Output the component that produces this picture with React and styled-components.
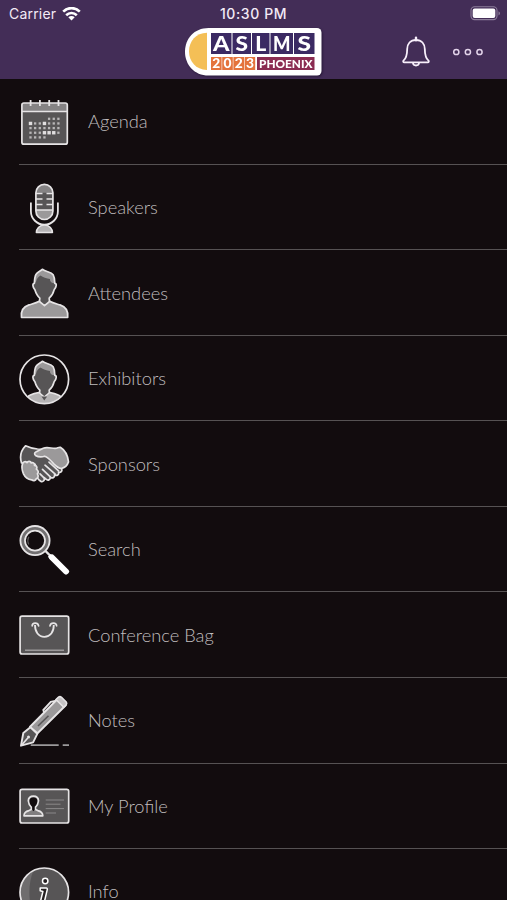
import React from "react";
import styled, {createGlobalStyle} from "styled-components";

const GlobalStyle = createGlobalStyle`
  body {
    margin: 0;
    background: #120c0e;
    overflow: hidden;
  }
`;

const LIGHT = "#e6e4e5";
const MID = "#9b999a";
const DARK = "#575556";

const menus = [
    {name: "Agenda", Icon: AgendaIcon},
    {name: "Speakers", Icon: SpeakersIcon},
    {name: "Attendees", Icon: AttendeesIcon},
    {name: "Exhibitors", Icon: ExhibitorsIcon},
    {name: "Sponsors", Icon: SponsorsIcon},
    {name: "Search", Icon: SearchIcon},
    {name: "Conference Bag", Icon: BagIcon},
    {name: "Notes", Icon: NotesIcon},
    {name: "My Profile", Icon: ProfileIcon},
    {name: "Info", Icon: InfoIcon},
];

export default function App() {
    return (
        <Screen>
            <GlobalStyle/>
            <Header>
                <StatusBar>
                    <Carrier>
                        <span>Carrier</span>
                        <WifiIcon/>
                    </Carrier>
                    <Clock>10:30 PM</Clock>
                    <BatteryIcon/>
                </StatusBar>
                <NavBar>
                    <span/>
                    <Logo/>
                    <Actions>
                        <BellIcon/>
                        <MoreIcon/>
                    </Actions>
                </NavBar>
            </Header>
            <Menu>
                {
                    menus.map(({name, Icon}) => (
                        <MenuItem key={name}>
                            <MenuIcon viewBox="0 0 52 52"><Icon/></MenuIcon>
                            <MenuName>{name}</MenuName>
                        </MenuItem>
                    ))
                }
            </Menu>
        </Screen>
    );
}

// status bar icons
function WifiIcon() {
    return (
        <svg width="19" height="14" viewBox="0 0 19 14" fill="none" stroke="#fff" strokeWidth="2.6">
            <path d="M1.2 4.600C6 -.1 13 -.1 17.800 4.600"/>
            <path d="M4.200 8.200c3-2.900 7.600-2.900 10.600 0"/>
            <path d="M6.300 10.300c1.800-1.700 4.600-1.700 6.400 0l-3.200 3.200z" fill="#fff" stroke="none"/>
        </svg>
    );
}

function BatteryIcon() {
    return (
        <svg width="32" height="15" viewBox="0 0 32 15">
            <rect x="1" y=".8" width="26" height="12.800" rx="3.600" fill="none" stroke="#8d7e9b" strokeWidth="1.100"/>
            <rect x="2.700" y="2.500" width="22.600" height="9.400" rx="2" fill="#fff"/>
            <path d="M28.500 5.200c2 .8 2 3.400 0 4.200z" fill="#8d7e9b"/>
        </svg>
    );
}

function BellIcon() {
    return (
        <svg width="28" height="32" viewBox="0 0 28 32" fill="none" stroke="#f8effb" strokeWidth="1.800"
             strokeLinecap="round" strokeLinejoin="round">
            <path d="M14 1.800v2.400" strokeWidth="2.400"/>
            <path d="M14 4C8.300 4 5.300 8 5.200 13c-.1 6-1 9.300-3.500 11.400-.9.900-.6 2 .6 2h23.400c1.200 0 1.500-1.100.6-2-2.500-2.100-3.400-5.400-3.500-11.400C22.700 8 19.700 4 14 4z"/>
            <path d="M11 27c.3 3.300 5.700 3.300 6 0"/>
        </svg>
    );
}

function MoreIcon() {
    return (
        <svg width="32" height="8" viewBox="0 0 32 8" fill="none" stroke="#e3d4ea" strokeWidth="1.500">
            <circle cx="4.300" cy="4" r="2.600"/>
            <circle cx="15.900" cy="4" r="2.600"/>
            <circle cx="27.500" cy="4" r="2.600"/>
        </svg>
    );
}

function Logo() {
    // letter, tile x, tile width, glyph width
    const letters = [
        ["A", 26, 20.5, 16.5],
        ["S", 47.5, 18.5, 12.5],
        ["L", 67, 17.5, 11],
        ["M", 85.5, 22.5, 17.5],
        ["S", 109, 20.5, 13.5],
    ];
    const years = ["2", "0", "2", "3"];
    return (
        <LogoSvg width="137" height="48" viewBox="0 0 137 48">
            <path d="M23.500 0H132a4.500 4.500 0 0 1 4.500 4.500V43a4.500 4.500 0 0 1-4.500 4.500H23.500C9 47.500 0 36.500 0 23.700S9 0 23.500 0z" fill="#fff"/>
            <path d="M22 4.700v37.200C11 42 4 33.500 4 23.300S11 4.700 22 4.700z" fill="#f4bf56"/>
            {letters.map(([letter, x, w, glyph], id) => (
                <g key={id}>
                    <rect x={x} y="5" width={w} height="21" fill="#3b2a63"/>
                    <text x={x + (w - glyph) / 2} y="22.700" fontSize="20.500" textLength={glyph}
                          lengthAdjust="spacingAndGlyphs">{letter}</text>
                </g>
            ))}
            {years.map((num, id) => (
                <g key={id}>
                    <rect x={26 + id * 11.2} y="29" width="10.600" height="13" fill="#e4733c"/>
                    <text x={27.3 + id * 11.2} y="40.200" fontSize="13" textLength="8"
                          lengthAdjust="spacingAndGlyphs">{num}</text>
                </g>
            ))}
            <rect x="72" y="29" width="57.500" height="13" fill="#8b2c52"/>
            <text x="74" y="39.700" fontSize="11.500" textLength="53.500" lengthAdjust="spacingAndGlyphs">PHOENIX</text>
        </LogoSvg>
    );
}

// menu icons, all of them on a 52 x 52 grid
function AgendaIcon() {
    const dots = [];
    for (let row = 0; row < 5; row++) {
        for (let col = 0; col < 7; col++) {
            if ((row === 0 && col < 4) || (row === 4 && col > 3)) continue;
            const big = (row === 1 && (col === 0 || col === 3)) || (row === 3 && col > 2 && col < 6);
            const size = big ? 3.4 : 2.3;
            dots.push(
                <rect key={row + "-" + col} x={12.5 + col * 4.65 - size / 2} y={22.8 + row * 4.65 - size / 2}
                      width={size} height={size} fill={big ? "#e0dedf" : "#b9b7b8"}/>
            );
        }
    }
    return (
        <>
            <rect x="3.900" y="7" width="45.400" height="41.200" rx="2" fill={DARK}/>
            <path d="M4 15.500V9q0-2 2-2h41.300q2 0 2 2v6.500z" fill="#858384"/>
            <rect x="3.900" y="7" width="45.400" height="41.200" rx="2" fill="none" stroke={LIGHT} strokeWidth="1.700"/>
            <path d="M4 15.500h45" stroke={LIGHT} strokeWidth="1.700"/>
            <path d="M12.600 4v6M21.900 4v6M31.200 4v6M40.500 4v6" stroke={LIGHT} strokeWidth="1.800"/>
            {dots}
        </>
    );
}

function SpeakersIcon() {
    return (
        <>
            <rect x="17.900" y="2.300" width="17" height="35.200" rx="8.500" fill={DARK}/>
            <path d="M18 28h17v1a8.500 8.500 0 0 1-17 0z" fill={MID}/>
            <path d="M18 10.800a8.500 8.500 0 0 1 17 0z" fill="#858384"/>
            <rect x="17.900" y="2.300" width="17" height="35.200" rx="8.500" fill="none" stroke={LIGHT} strokeWidth="1.700"/>
            <path d="M18 28h17M18 11.500h6.500M28.500 11.500H35M18 17h6.500M28.500 17H35M18 22.500h6.500M28.500 22.500H35" stroke={LIGHT} strokeWidth="1.600"/>
            <path d="M12.900 20.500v8.700a13.500 13.500 0 0 0 27 0v-8.700" fill="none" stroke={LIGHT} strokeWidth="1.800"/>
            <path d="M18.400 50.500c0-3.500 2.800-7.500 8-7.500s8 4 8 7.500z" fill="#b5b3b4" stroke={LIGHT} strokeWidth="1.600" strokeLinejoin="round"/>
        </>
    );
}

// head with hair, used by attendees and exhibitors
function Head() {
    return (
        <>
            <path d="M24.300 2.300c-2 2-4.800 2.300-6.300 5-1.400 2.500-1.500 5-1.600 9-2.300 0-1.700 4.300.4 6.300 1.200 4 2.400 6.400 5 8.500l-.5 5.300 5.200 3.200 5.200-3.200-.5-5.300c2.600-2.100 4-4.500 5-8.500 2.200-2 2.900-6.300.6-6.300 0-3.500-.2-6-1.700-8.600-2.200-3.200-7-2.500-10.800-5.400z" fill={DARK}/>
            <path d="M24.300 2.300c-2 2-4.800 2.300-6.300 5-1.400 2.500-1.500 5-1.600 9l1.600-1.500c.7-3.500 2.600-5 4.500-6.300 2.500 2 6 3 9.500 3.500-.2 2 1 3.500 2.700 4l2.100.3c0-3.500-.2-6-1.700-8.600-2.200-3.200-7-2.500-10.800-5.400z" fill={MID}/>
            <path d="M21.300 36.400l.5-5.300c-2.600-2.100-3.800-4.500-5-8.500-2.100-2-2.700-6.300-.4-6.300.1-4 .2-6.500 1.600-9 1.500-2.700 4.300-3 6.300-5 3.800 2.900 8.600 2.200 10.800 5.400 1.500 2.600 1.700 5.100 1.700 8.600 2.300 0 1.600 4.300-.6 6.300-1 4-2.400 6.400-5 8.500l.5 5.300" fill="none" stroke={LIGHT} strokeWidth="1.700" strokeLinejoin="round"/>
        </>
    );
}

function AttendeesIcon() {
    return (
        <>
            <Head/>
            <path d="M3.500 50.500c-1-7.500 2.500-11 7.500-12.600 4-1.200 7.500-2 10.300-3.600l5.200 4.300 5.200-4.300c2.800 1.600 6.300 2.400 10.300 3.600 5 1.600 8.500 5.100 7.700 12.600z"
                  fill={MID} stroke={LIGHT} strokeWidth="1.700" strokeLinejoin="round"/>
        </>
    );
}

function ExhibitorsIcon() {
    return (
        <>
            <clipPath id="badge"><circle cx="26.300" cy="26.300" r="24.200"/></clipPath>
            <g clipPath="url(#badge)">
                <g transform="translate(0 6)"><Head/></g>
                <path d="M7 47c2.500-5.500 9-6.600 14-7.500l5.300 4.500 5.300-4.500c5 .9 11.500 2 14 7.500v8H7z" fill="#b5b3b4" stroke={LIGHT} strokeWidth="1.400"/>
                <path d="M23.500 43.500h5.600l-2.800 4z" fill={DARK}/>
            </g>
            <circle cx="26.300" cy="26.300" r="24.300" fill="none" stroke={LIGHT} strokeWidth="1.700"/>
        </>
    );
}

function SponsorsIcon() {
    return (
        <g stroke={LIGHT} strokeWidth="1.700" strokeLinejoin="round" strokeLinecap="round" transform="translate(0 .4)">
            <path d="M7.500 7.400c3.500 1.700 7.500 2.800 12 3.200l8 .4 16 19.300c1.200 2.700-.8 4.200-3 3.400.8 2.700-1.600 4.200-4 2.700.5 2.900-2.300 4-4.300 2.400.3 2.700-2.400 3.700-4.200 2l-1.800-1.600c.8 2.500-1 4.700-3.300 3.800-1.600-.7-3-2.500-4.200-4l-1.500-13-13.700-1.500c-2-6.500-.5-12.500 4-17.100z" fill={DARK}/>
            <path d="M4.500 25.500c1-2.500 3-2.700 4.500-1.300 1-1.800 3.500-1.500 4.200.3 2-.8 3.600.6 3.300 2.500 2.300.2 3 2.200 1.900 3.700 2.200 1.500 2.300 3.500 1 4.800 1.500 2.500.6 4.300-1 4.700-1 2.500-3 2.500-4.800 1.200-3.300-.4-6.700-3-8.100-6-1.500-3.500-2-7-1-9.900z" fill={MID}/>
            <path d="M17.500 17c-1.200-1-1.200-2.600.3-3.300l7.500-3.900c4.200-1.700 8.200.4 12 .2 2.200-.1 3.200-1.400 5-1.100 4.700 2.800 7.500 8.300 8.200 14.600-1.200 3.500-3.500 6-7.200 6.600-3.400-.4-5.600-2.600-7.600-4.600-2.800-3.200-5.200-6.500-9-7.700-3.400 1-6.200.9-9.200-.8z" fill={MID}/>
            <path d="M27 26.800l10.200 9M24.500 31l7.800 7.500M22 35.500l4.300 4.200M31 23.700l9.500 8.800" fill="none"/>
        </g>
    );
}

function SearchIcon() {
    return (
        <>
            <circle cx="17" cy="16.600" r="12.300" fill="none" stroke="#727071" strokeWidth="5"/>
            <circle cx="17" cy="16.600" r="14.600" fill="none" stroke={LIGHT} strokeWidth="1.800"/>
            <circle cx="17" cy="16.600" r="10" fill="none" stroke={LIGHT} strokeWidth="1.700"/>
            <path d="M10.800 20.500c-1.300-2.600-1.300-5.200 0-7.800" fill="none" stroke={DARK} strokeWidth="1.200"/>
            <path d="M27.500 27l5 5" stroke={LIGHT} strokeWidth="2.400"/>
            <path d="M34 33.500l14 14" stroke="#fff" strokeWidth="6" strokeLinecap="round"/>
            <path d="M31.300 31.300l4 4" stroke="#fff" strokeWidth="4"/>
        </>
    );
}

function BagIcon() {
    return (
        <>
            <rect x="2.100" y="7.200" width="48.600" height="37.800" rx="2" fill={DARK} stroke={LIGHT} strokeWidth="1.700"/>
            <path d="M7 41.200h39" stroke={MID} strokeWidth="1.400"/>
            <path d="M14.200 16.800c0-3.700 5.800-3.700 6.400 0M32 16.800c.6-3.700 6.400-3.700 6.600 0" fill="none" stroke={LIGHT} strokeWidth="1.700" strokeLinecap="round"/>
            <path d="M17 16c0 7 3.500 11.800 9.400 11.800s9.400-4.800 9.400-11.800" fill="none" stroke={LIGHT} strokeWidth="1.800"/>
        </>
    );
}

function NotesIcon() {
    return (
        <>
            <path d="M12.700 50.200h28M44.700 50.200h6.300" stroke={MID} strokeWidth="1.700"/>
            <path d="M40.500 3l7.300 7.300-28.300 28-7.700-6.300z" fill={MID} stroke={LIGHT} strokeWidth="1.900" strokeLinejoin="round"/>
            <path d="M38 4.500l2.800-2.600c1-.6 1.800-.4 2.700.4l4.700 4.700c.7.900.7 1.800 0 2.700l-2.500 2.500z" fill="#c5c3c4" stroke={LIGHT} strokeWidth="1.600"/>
            <path d="M37.300 6l-4.500.8L25.300 15l.8 2.500" fill="none" stroke={LIGHT} strokeWidth="1.900"/>
            <path d="M20 31l10.500-10.300" stroke={DARK} strokeWidth="1.600"/>
            <path d="M12.400 32.300l6.900 6.600-4.200 8.400L3 50.700 5.300 38z" fill={DARK} stroke={LIGHT} strokeWidth="1.900" strokeLinejoin="round"/>
            <path d="M3.500 50.200l6.300-7.300" stroke={LIGHT} strokeWidth="1.600"/>
            <circle cx="10.500" cy="42" r="1.500" fill={LIGHT}/>
        </>
    );
}

function ProfileIcon() {
    return (
        <>
            <rect x="2.100" y="9.300" width="48.600" height="33.700" rx="2" fill={DARK} stroke={LIGHT} strokeWidth="1.700"/>
            <path d="M6 35.800c0-3.300 2-4.500 5-5.200l2.300-1.200v-2.300c-1.700-1.500-2.800-3.700-3-6.300.2-3.500 2.200-4.700 5.100-4.700s5 1.400 5.100 4.700c-.2 2.600-1.300 4.800-3 6.300v2.300l2.300 1.200c3 .7 5 1.900 5 5.200z"
                  fill="#807e7f" stroke={LIGHT} strokeWidth="1.700" strokeLinejoin="round"/>
            <path d="M11.500 21.200c0-2.200 1-3.600 3.900-3.600s3.900 1.400 3.900 3.600c0 2.200-1.500 4.500-2.700 5.500v3.100l-1.200 1.400-1.200-1.400v-3.100c-1.200-1-2.700-3.300-2.700-5.500z" fill="#120c0e"/>
            <path d="M27.700 20H46M27.700 24.200h14.800M27.700 28.600H46M27.700 33H38" stroke="#8a8889" strokeWidth="1"/>
        </>
    );
}

function InfoIcon() {
    return (
        <>
            <circle cx="26.300" cy="26.300" r="24.300" fill={DARK}/>
            <path d="M15.500 4.700a24 24 0 0 0 0 43.200c-5.500-12-5.500-31 0-43.200z" fill="#6f6d6e"/>
            <circle cx="26.300" cy="26.300" r="24.300" fill="none" stroke={LIGHT} strokeWidth="1.700"/>
            <circle cx="27.200" cy="15" r="2.700" fill="#252021" stroke="#fff" strokeWidth="1.500"/>
            <path d="M22.200 22h6c1 0 1.300.7 1 1.800l-3 12.700c1 .3 2-.2 3-1.100-.7 3-2.500 4.300-4.800 4-2-.4-2.400-1.900-2-3.700l2.500-10.200-2.700-.7z" fill="#252021" stroke="#fff" strokeWidth="1.500" strokeLinejoin="round"/>
        </>
    );
}

const Screen = styled.div`
  width: 100%;
  height: 900px;
  display: flex;
  flex-direction: column;
  overflow: hidden;
  background: #120c0e;
`;

const Header = styled.header`
  flex: none;
  height: 79px;
  box-sizing: border-box;
  background: #432d57;
  color: #f3eaf6;
`;

const StatusBar = styled.div`
  height: 27px;
  padding: 0 5px 0 9px;
  display: grid;
  grid-template-columns: 1fr auto 1fr;
  align-items: center;
  font: 400 14px/27px Inter, "Liberation Sans", sans-serif;

  > svg {
    justify-self: end;
  }
`;

const Carrier = styled.div`
  display: flex;
  align-items: center;
  gap: 6px;
  letter-spacing: 0.2px;
`;

const Clock = styled.span`
  font-weight: 500;
  letter-spacing: 0.6px;
  margin-right: 4px;
`;

const NavBar = styled.div`
  height: 50px;
  padding: 0 23px 0 23px;
  display: grid;
  grid-template-columns: 1fr auto 1fr;
  align-items: center;
`;

const LogoSvg = styled.svg`
  margin-right: 1px;
  filter: drop-shadow(1px 1px 1px rgba(20, 8, 35, 0.6));

  text {
    fill: #fff;
    font-family: Lato, "Open Sans", sans-serif;
    font-weight: 900;
  }
`;

const Actions = styled.div`
  display: flex;
  justify-content: flex-end;
  align-items: center;
  gap: 22px;
`;

const Menu = styled.ul`
  margin: 0;
  padding: 0.2px 0 0 19px;
  list-style: none;
`;

const MenuItem = styled.li`
  height: 85.55px;
  box-sizing: border-box;
  display: flex;
  align-items: center;
  gap: 18px;
  border-bottom: 1px solid #565253;
`;

const MenuIcon = styled.svg`
  flex: none;
  width: 52px;
  height: 52px;
  margin: 1px 0 0 -1px;
`;

const MenuName = styled.span`
  color: #c0bdbe;
  font: 300 18.3px/24px Lato, "Open Sans", sans-serif;
`;
